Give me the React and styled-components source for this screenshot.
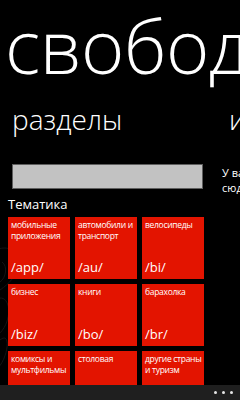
import React from "react";
import styled, { createGlobalStyle } from "styled-components";

const Global = createGlobalStyle`
  html, body { margin: 0; padding: 0; background: #000; }
  body { width: 240px; height: 400px; overflow: hidden; font-family: "Open Sans", "Noto Sans", sans-serif; color: #fff; }
`;

const Page = styled.div`
  position: relative;
  width: 240px;
  height: 400px;
  overflow: hidden;
  background: #000;
`;

const Backdrop = styled.svg`
  position: absolute;
  left: 0;
  top: 0;
  width: 240px;
  height: 400px;
  pointer-events: none;
`;

const Content = styled.div`
  position: relative;
  display: flex;
  flex-direction: column;
`;

const Title = styled.h1`
  margin: 9px 0 0 5px;
  font-size: 74px;
  line-height: 74px;
  font-weight: 300;
  white-space: nowrap;
  letter-spacing: -0.5px;
`;

const Panorama = styled.div`
  display: flex;
  margin-top: 22px;
  padding-left: 8px;
`;

const Section = styled.section`
  flex: 0 0 ${(p) => p.$width}px;
  display: flex;
  flex-direction: column;
`;

const Header = styled.h2`
  margin: 0 0 0 ${(p) => p.$indent}px;
  font-size: 28px;
  line-height: 28px;
  font-weight: 300;
  white-space: nowrap;
`;

const SearchBox = styled.div`
  margin: 31px 0 0 4px;
  width: 189px;
  height: 23px;
  background: #c2c2c2;
  border: 1px solid #5e5e5e;
`;

const Caption = styled.div`
  margin-top: 7px;
  font-size: 13px;
  line-height: 16px;
`;

const Grid = styled.div`
  margin-top: 5px;
  display: grid;
  grid-template-columns: repeat(3, 62px);
  grid-auto-rows: 62px;
  gap: 5px;
`;

const Tile = styled.div`
  background: #e31400;
  display: flex;
  flex-direction: column;
  justify-content: space-between;
  padding: 2px 0 5px 3px;
  box-sizing: border-box;
`;

const TileLabel = styled.div`
  font-size: 8.5px;
  line-height: 11px;
  letter-spacing: -0.3px;
  color: #fff;
`;

const TileCode = styled.div`
  font-size: 13px;
  line-height: 13px;
  font-weight: 400;
  color: #fff;
`;

const Note = styled.div`
  margin-top: 32px;
  font-size: 11px;
  line-height: 15px;
  white-space: nowrap;
  color: #fff;
`;

const AppBar = styled.div`
  position: absolute;
  left: 0;
  right: 0;
  bottom: 0;
  height: 15px;
  background: #1f1f1f;
  display: flex;
  justify-content: flex-end;
  align-items: center;
  gap: 5px;
  padding-right: 7px;
`;

const Dot = styled.span`
  width: 3px;
  height: 3px;
  border-radius: 50%;
  background: #e6e6e6;
`;

const tiles = [
  ["мобильные приложения", "/app/"],
  ["автомобили и транспорт", "/au/"],
  ["велосипеды", "/bi/"],
  ["бизнес", "/biz/"],
  ["книги", "/bo/"],
  ["барахолка", "/br/"],
  ["комиксы и мультфильмы", "/co/"],
  ["столовая", "/cu/"],
  ["другие страны и туризм", "/int/"],
];

export default function App() {
  return (
    <Page>
      <Global />
      <Backdrop viewBox="0 0 240 400">
        <g fill="none" stroke="#141414" strokeWidth="1">
          <path d="M-5 250 C 20 240, 30 270, 0 290" />
          <path d="M-5 300 C 10 290, 15 320, -2 335" />
          <path d="M0 340 C 12 330, 8 360, -4 370" />
          <path d="M2 262 C 8 266, 6 278, 0 282" />
        </g>
      </Backdrop>
      <Content>
        <Title>свободная</Title>
        <Panorama>
          <Section $width={214}>
            <Header $indent={4}>разделы</Header>
            <SearchBox />
            <Caption>Тематика</Caption>
            <Grid>
              {tiles.map(([label, code]) => (
                <Tile key={code}>
                  <TileLabel>{label}</TileLabel>
                  <TileCode>{code}</TileCode>
                </Tile>
              ))}
            </Grid>
          </Section>
          <Section $width={200}>
            <Header $indent={7}>избранное</Header>
            <Note>
              У вас пока нет избранного,
              <br />
              сюда можно добавить разделы
            </Note>
          </Section>
        </Panorama>
      </Content>
      <AppBar>
        <Dot />
        <Dot />
        <Dot />
      </AppBar>
    </Page>
  );
}
